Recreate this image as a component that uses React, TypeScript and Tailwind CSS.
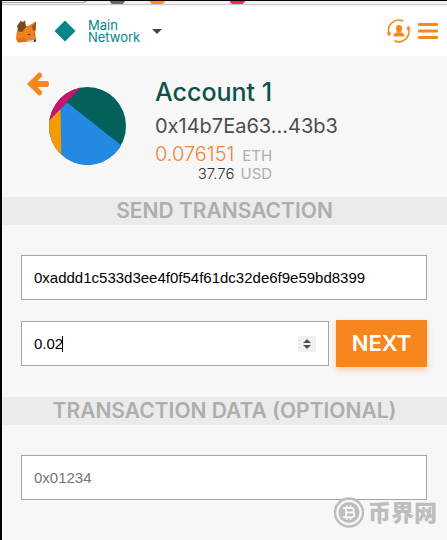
import { useState } from "react";

export default function App() {
  const [recipient, setRecipient] = useState("0xaddd1c533d3ee4f0f54f61dc32de6f9e59bd8399");
  const [amount, setAmount] = useState("0.02");
  const [data, setData] = useState("");

  const step = (by: number) => setAmount(String(Number(amount) + by));

  return (
    <div className="relative flex min-h-screen flex-col border-l-2 border-black bg-[#f7f7f7] font-['Inter','Liberation_Sans',sans-serif]">
      <BrowserEdge />
      <Header />
      <main>
        <AccountDetail />
        <SectionTitle>SEND TRANSACTION</SectionTitle>
        <form onSubmit={(e) => e.preventDefault()}>
          <div className="flex flex-col gap-5 py-[30px] pr-5 pl-[19px]">
            <input
              aria-label="Recipient address"
              className="h-[45px] w-full border border-[#a6a6a6] bg-white px-3 font-['Liberation_Sans',sans-serif] text-[15px] text-black outline-none"
              value={recipient}
              onChange={(e) => setRecipient(e.target.value)}
            />
            <div className="flex items-center gap-[7px]">
              <div className="relative flex h-[45px] flex-1 items-center border border-[#a6a6a6] bg-white pr-3">
                <input
                  aria-label="Amount"
                  type="number"
                  step="any"
                  className="h-full w-full min-w-0 [appearance:textfield] pl-3 font-['Liberation_Sans',sans-serif] text-[15px] text-black caret-transparent outline-none [&::-webkit-inner-spin-button]:appearance-none"
                  value={amount}
                  onChange={(e) => setAmount(e.target.value)}
                />
                <span className="absolute left-10 h-4 w-px bg-black" />
                <div className="flex h-4 w-[18px] shrink-0 flex-col items-center justify-center gap-0.5 bg-[#f0f0f0]">
                  <button type="button" aria-label="Increase" onClick={() => step(0.01)}>
                    <SpinArrow />
                  </button>
                  <button type="button" aria-label="Decrease" onClick={() => step(-0.01)}>
                    <SpinArrow className="rotate-180" />
                  </button>
                </div>
              </div>
              <button className="h-[47px] w-[91px] bg-[#f7861c] text-[22px] font-semibold text-white shadow-[0_3px_6px_rgba(247,134,28,0.36)]">
                NEXT
              </button>
            </div>
          </div>
          <SectionTitle>TRANSACTION DATA (OPTIONAL)</SectionTitle>
          <div className="py-[30px] pr-5 pl-[19px]">
            <input
              aria-label="Transaction data"
              className="h-[45px] w-full border border-[#a6a6a6] bg-white px-3 font-['Liberation_Sans',sans-serif] text-[15px] text-black outline-none placeholder:text-[#757575]"
              placeholder="0x01234"
              value={data}
              onChange={(e) => setData(e.target.value)}
            />
          </div>
        </form>
      </main>
      <Watermark />
    </div>
  );
}

function BrowserEdge() {
  return (
    <svg className="h-1.5 w-full shrink-0 bg-[#f3eff5]" aria-hidden="true">
      <path d="M0 1H85Q84 3 82 3H0z" fill="#a8a6aa" />
      <path d="M0 1H83L81 2H0z" fill="#fff" />
      <path d="M108 1h15q-1 3-3 3h-9q-3 0-3-3z" fill="#686468" />
      <path d="M148 1h15q-1 3-3 3h-9q-3 0-3-3z" fill="#f7931a" />
      <path d="M228 1h15q-1 3-3 3h-9q-3 0-3-3z" fill="#ef2950" />
      <rect width="100%" height="1" fill="#0b0509" />
      <rect y="4" width="100%" height="1" fill="#cbc8cc" />
      <rect y="5" width="100%" height="1" fill="#f6f5f6" />
    </svg>
  );
}

function Header() {
  return (
    <header className="flex h-[50px] shrink-0 items-center justify-between bg-white pr-[9px] pl-3.5">
      <div className="flex items-center gap-4">
        <FoxIcon />
        <button className="flex items-center gap-3 text-left text-[13px] leading-3 text-[#038789]">
          <svg width="22" height="22" viewBox="0 0 22 22" fill="currentColor">
            <path d="M11 .5 21.5 11 11 21.5.5 11z" />
          </svg>
          <span>
            Main
            <br />
            Network
          </span>
          <svg width="10" height="5" viewBox="0 0 10 5" fill="#444">
            <path d="M0 0h10L5 5z" />
          </svg>
        </button>
      </div>
      <div className="flex items-center gap-[7px]">
        <button aria-label="Switch account">
          <SwitchIcon />
        </button>
        <button aria-label="Menu">
          <svg width="20" height="16" viewBox="0 0 20 16" fill="#f7861c">
            <rect width="20" height="3" rx="1" />
            <rect y="6.5" width="20" height="3" rx="1" />
            <rect y="13" width="20" height="3" rx="1" />
          </svg>
        </button>
      </div>
    </header>
  );
}

function AccountDetail() {
  return (
    <section className="flex h-[141px] items-start pl-[25px]">
      <button aria-label="Back" className="mt-4">
        <svg width="22" height="24" viewBox="0 0 22 24" fill="#f7861c">
          <path d="M0 12 1.500 10.500 11.500.8Q13 0 14.300 1.500L15 2.600Q15.600 3.800 14.500 5L10.500 9H20.500Q22 9.200 22 12T20.500 15H10.500L14.500 19Q15.600 20.200 15 21.400L14.300 22.500Q13 24 11.500 23.200L1.500 13.500z" />
        </svg>
      </button>
      <Identicon />
      <div className="ml-[29px] pt-5 whitespace-nowrap">
        <h1 className="text-[25px] leading-8 font-medium text-[#0d5347]">Account 1</h1>
        <p className="text-xl leading-9 text-[#4d4d4d]">0x14b7Ea63...43b3</p>
        <div className="grid w-fit grid-cols-[auto_auto] items-baseline justify-items-end gap-x-1.5 text-[#aeaeae]">
          <span className="text-xl leading-5 font-light text-[#f58237]">0.076151</span>
          <span className="text-[15px] leading-5">ETH</span>
          <span className="text-[15px] leading-4 font-light text-[#333]">37.76</span>
          <span className="text-[15px] leading-4">USD</span>
        </div>
      </div>
    </section>
  );
}

function SectionTitle({ children }: { children: string }) {
  return (
    <h2 className="bg-[#ebebeb] text-center text-[21px] leading-7 font-semibold text-[#aeaeae]">{children}</h2>
  );
}

function Identicon() {
  return (
    <svg className="mt-[31px] shrink-0" width="77" height="78" viewBox="0 0 77 78">
      <defs>
        <clipPath id="disc">
          <ellipse cx="38.5" cy="39" rx="38.5" ry="39" />
        </clipPath>
      </defs>
      <g clipPath="url(#disc)">
        <rect width="77" height="78" fill="#03605b" />
        <path d="M18 15.500 77 62V78H0V33z" fill="#2489e3" />
        <path d="M0 33 11.500 22 12.500 78H0z" fill="#f79a00" />
        <path d="M0 0H32L0 34z" fill="#c8146e" />
      </g>
    </svg>
  );
}

function SpinArrow({ className = "" }: { className?: string }) {
  return (
    <svg className={`block ${className}`} width="8" height="4" viewBox="0 0 8 4" fill="#505050">
      <path d="M0 4h8L4 0z" />
    </svg>
  );
}

function FoxIcon() {
  return (
    <svg width="22" height="24" viewBox="0 0 22 24">
      <path d="M1.500 10 5 7 12 7 20 2.500 20 10 19 14.500 20.500 20.500 18 23 12 22.500 2 23.500 0 20 .5 14z" fill="#ee8222" />
      <path d="M4.500 2 7 3 9 1.500 10 8 6 13 2.500 12.500 1 7z" fill="#7b451e" />
      <path d="M20 2.500 19.700 11 17.500 12 15.500 7.500z" fill="#9c5626" />
      <path d="M1 20 8 18 12 22.500 2 23.500z" fill="#dc701a" />
      <path d="M11 15 14.500 15 13.500 16.500zM18 14.500 19.300 14 18.700 16z" fill="#5d3518" />
      <path d="M10 22 16 21 20 21 18 23.300H12z" fill="#dccfc6" />
      <path d="M18 20.800h2.200l-.7 2.200h-1.500z" fill="#333338" />
    </svg>
  );
}

function SwitchIcon() {
  return (
    <svg width="24" height="24" viewBox="0 0 24 24" fill="none" stroke="#f7861c" strokeWidth="1.600">
      <path d="M16 2.200A10 10 0 0 0 2 14" />
      <path d="M7.500 21.700A10 10 0 0 0 21.500 10" />
      <path d="m-.5 13.500 2.800 4 2.200-4zM24 10.500 21.300 6.500l-2.300 4z" fill="#f7861c" stroke="none" />
      <ellipse cx="12" cy="9.700" rx="3" ry="3.700" fill="#f7861c" stroke="none" />
      <path d="M6.500 17.500c0-3 1.500-3.300 4-4.200h3c2.500.9 4 1.200 4 4.200z" fill="#f7861c" stroke="none" />
    </svg>
  );
}

function Watermark() {
  return (
    <div className="absolute right-2.5 bottom-3 flex items-start gap-1 text-[#bdbdbd]">
      <svg width="31" height="31" viewBox="0 0 31 31" fill="none" stroke="currentColor">
        <circle cx="16" cy="15.500" r="14" strokeWidth="2.500" />
        <circle cx="16" cy="15.500" r="10.500" fill="currentColor" stroke="none" />
        <path d="M10 11h8.500a2.200 2.200 0 0 1 0 4.500H13h6a2.300 2.300 0 0 1 0 4.700H10M13 11v9M14 8.500V11M17.500 8.500V11M14 20v2.700M17.500 20v2.700" stroke="#f7f7f7" strokeWidth="1.800" />
      </svg>
      <span className="font-['Noto_Sans_CJK_SC',sans-serif] text-[23px] leading-7 font-black">币界网</span>
    </div>
  );
}
